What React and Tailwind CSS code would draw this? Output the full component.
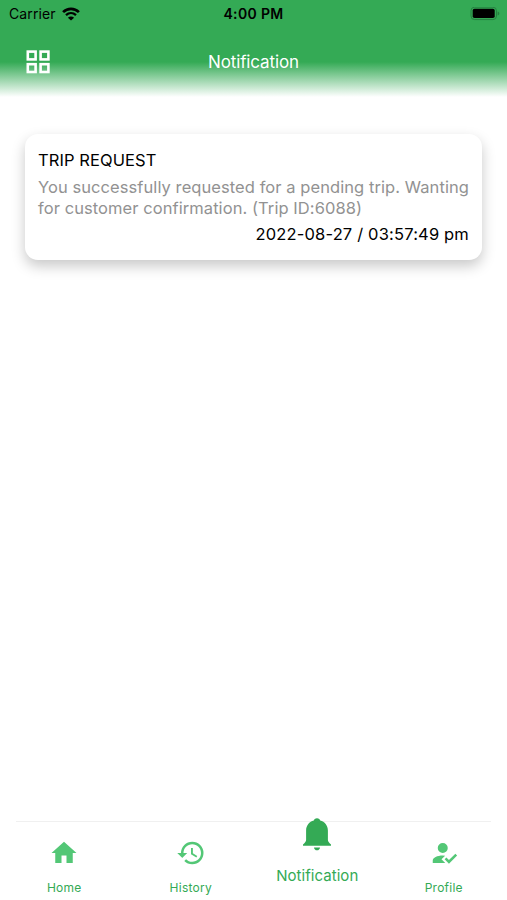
import React from 'react';
import clsx from 'clsx';

const WifiIcon = () => (
  <svg viewBox="0 0 18 14" className="h-[14px] w-[18px]" fill="none" stroke="#000">
    <path d="M1.1 5.1C5.6.7 12.4.7 16.9 5.1" strokeWidth="2.7" />
    <path d="M4 8.2c2.9-2.7 7.1-2.7 10 0" strokeWidth="2.3" />
    <path d="M9 13.6 5.9 10.7c1.8-1.7 4.4-1.7 6.2 0z" fill="#000" stroke="none" />
  </svg>
);

const BatteryIcon = () => (
  <svg viewBox="0 0 30 14" className="h-[14px] w-[30px]">
    <rect x="1" y="0.2" width="25.5" height="12.4" rx="3.6" fill="none" stroke="#258040" strokeWidth="1" />
    <rect x="2.7" y="1.7" width="22" height="9.4" rx="1.8" fill="#000" />
    <path d="M27.6 4.500v4c1.100-.4 1.700-1.100 1.700-2s-.6-1.600-1.700-2z" fill="#258040" />
  </svg>
);

const GridIcon = () => (
  <svg viewBox="0 0 24 24" className="h-6 w-6" fill="none" stroke="#fff" strokeWidth="2.6">
    <rect x="1.8" y="1.6" width="7.8" height="7.8" />
    <rect x="14.6" y="1.6" width="7.8" height="7.8" />
    <rect x="1.8" y="14.2" width="7.8" height="7.8" />
    <rect x="14.6" y="14.2" width="7.8" height="7.8" />
  </svg>
);

const BellIcon = () => (
  <svg viewBox="0 0 28 33" className="h-[33px] w-7" fill="currentColor">
    <path d="M14 .3c-1.8 0-3 1.1-3.2 2.300C6.300 3.800 3.100 7.600 3.100 12.400v9.600c0 1.500-1 2.600-3.100 4.600v1.200h28v-1.200c-2.100-2-3.100-3.100-3.100-4.600v-9.600c0-4.800-3.200-8.600-7.700-9.800C17 1.400 15.800.3 14 .3z" />
    <path d="M11 29.400h6c-.2 1.700-1.400 2.900-3 2.900s-2.800-1.200-3-2.900z" />
  </svg>
);

const icons = {
  home: 'M10 20v-6h4v6h5v-8h3L12 3 2 12h3v8z',
  history:
    'M13 3a9 9 0 0 0-9 9H1l3.890 3.890.07.14L9 12H6c0-3.870 3.130-7 7-7s7 3.130 7 7-3.130 7-7 7c-1.930 0-3.680-.790-4.940-2.060l-1.420 1.420A8.954 8.954 0 0 0 13 21a9 9 0 0 0 0-18zm-1 5v5l4.280 2.540.720-1.210-3.500-2.080V8z',
  profile:
    'M21.100 12.500l1.400 1.410-6.530 6.590L12.500 17l1.400-1.410 2.070 2.080zM10 17l3 3H3v-2c0-2.210 3.580-4 8-4l1.890.11zM11 4a4 4 0 1 1 0 8 4 4 0 0 1 0-8z',
};

const tabs = [
  { id: 'home', label: 'Home' },
  { id: 'history', label: 'History' },
  { id: 'notification', label: 'Notification', active: true },
  { id: 'profile', label: 'Profile' },
];

const TabItem = ({ id, label, active }) => (
  <button
    type="button"
    className={clsx(
      'flex w-[126.700px] flex-col items-center',
      active ? 'text-[#34aa55]' : 'pt-5 text-[#53c776]'
    )}
  >
    {active ? (
      <BellIcon />
    ) : (
      <svg viewBox="0 0 24 24" className="h-[30px] w-[30px]" fill="currentColor">
        <path d={icons[id]} />
      </svg>
    )}
    <span
      className={clsx(
        'text-[#34aa55]',
        active
          ? 'mt-[15px] text-[15px] leading-5 tracking-[0.05px]'
          : 'mt-3 text-[12px] leading-4 tracking-[0.25px]'
      )}
    >
      {label}
    </span>
  </button>
);

const NotificationCard = ({ title, message, date }) => (
  <div className="mx-[25px] mt-[37px] h-[126px] rounded-[13px] bg-white px-[13px] pt-4 shadow-[0_6px_14px_rgba(0,0,0,0.22)]">
    <h2 className="text-[16.500px] leading-[21px] tracking-[0.08px] text-black">{title}</h2>
    <p className="mt-[6px] whitespace-nowrap text-[16.500px] leading-[21px] tracking-[0.07px] text-[#929292]">
      {message[0]}
      <br />
      {message[1]}
    </p>
    <p className="mt-[5px] text-right text-[16.500px] leading-[21px] tracking-[0.17px] text-black">{date}</p>
  </div>
);

const App = () => {
  return (
    <div className="flex h-[900px] w-[507px] flex-col overflow-hidden bg-white font-[Inter,sans-serif]">
      <header className="h-[97px] shrink-0 bg-[linear-gradient(to_bottom,#34aa55_0px,#34aa55_62px,#ffffff_97px)]">
        <div className="grid h-[27px] grid-cols-3 items-center pr-[7px] pl-[9px] text-black">
          <div className="flex items-center gap-[6px]">
            <span className="text-[14px] tracking-[0.12px]">Carrier</span>
            <WifiIcon />
          </div>
          <span className="-ml-[2px] text-center text-[14px] font-semibold tracking-[0.35px]">4:00 PM</span>
          <div className="flex justify-end">
            <BatteryIcon />
          </div>
        </div>
        <div className="grid grid-cols-3 items-center px-[26px] pt-[23px]">
          <GridIcon />
          <h1 className="text-center text-[17px] leading-6 tracking-[-0.12px] text-white">Notification</h1>
        </div>
      </header>

      <main className="flex-1">
        <NotificationCard
          title="TRIP REQUEST"
          message={[
            'You successfully requested for a pending trip. Wanting',
            'for customer confirmation. (Trip ID:6088)',
          ]}
          date="2022-08-27 / 03:57:49 pm"
        />
      </main>

      <nav className="flex h-[82px] shrink-0 flex-col">
        <div className="mx-4 mt-[3px] h-px shrink-0 bg-[#f0f0f0]" />
        <div className="-mt-1 flex items-start pl-px">
          {tabs.map((tab) => (
            <TabItem key={tab.id} {...tab} />
          ))}
        </div>
      </nav>
    </div>
  );
};

export default App;
